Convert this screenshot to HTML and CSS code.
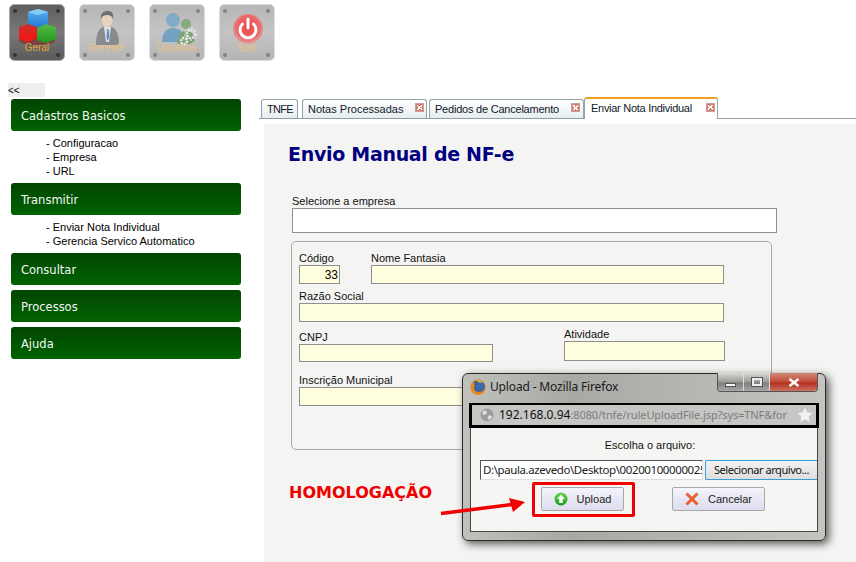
FILE: index.html
```html
<!DOCTYPE html>
<html lang="pt">
<head>
<meta charset="utf-8">
<title>TNFE</title>
<link rel="stylesheet" href="styles.css">
</head>
<body>
<svg class="defs" width="0" height="0" aria-hidden="true">
  <defs>
    <linearGradient id="tileDark" x1="0" y1="0" x2="0" y2="1"><stop offset="0" stop-color="#5e5e5e"/><stop offset=".5" stop-color="#787878"/><stop offset="1" stop-color="#5a5a5a"/></linearGradient>
    <linearGradient id="tileLight" x1="0" y1="0" x2="0" y2="1"><stop offset="0" stop-color="#b6b6b6"/><stop offset=".5" stop-color="#c4c4c4"/><stop offset="1" stop-color="#b4b4b4"/></linearGradient>
    <linearGradient id="blue" x1="0" y1="0" x2="0" y2="1"><stop offset="0" stop-color="#5bb4f4"/><stop offset="1" stop-color="#1f74cc"/></linearGradient>
    <linearGradient id="red" x1="0" y1="0" x2="0" y2="1"><stop offset="0" stop-color="#c83030"/><stop offset="1" stop-color="#ff1010"/></linearGradient>
    <linearGradient id="green" x1="0" y1="0" x2="0" y2="1"><stop offset="0" stop-color="#58b848"/><stop offset="1" stop-color="#1c9a1c"/></linearGradient>
    <radialGradient id="power" cx=".5" cy=".45" r=".55"><stop offset="0" stop-color="#e84848"/><stop offset=".7" stop-color="#e86a6a"/><stop offset="1" stop-color="#e4a0a0"/></radialGradient>
    <radialGradient id="fox" cx=".55" cy=".45" r=".55"><stop offset="0" stop-color="#3d6fb0"/><stop offset=".55" stop-color="#3564a4"/><stop offset="1" stop-color="#e07a18"/></radialGradient>
    <linearGradient id="orb" x1="0" y1="0" x2="0" y2="1"><stop offset="0" stop-color="#6ad848"/><stop offset="1" stop-color="#119a1c"/></linearGradient>
    <filter id="soft"><feGaussianBlur stdDeviation=".45"/></filter>
    <filter id="softText"><feGaussianBlur stdDeviation=".2"/></filter>
    <g id="screws">
      <circle cx="6" cy="7" r="2" fill="#333"/><circle cx="49" cy="7" r="2" fill="#333"/>
      <circle cx="6" cy="51" r="2" fill="#333"/><circle cx="49" cy="51" r="2" fill="#333"/>
    </g>
  </defs>
</svg>

<div class="page">
  <nav class="toolbar">
    <svg class="tile" viewBox="0 0 56 57" role="img" aria-label="Geral">
      <rect x=".5" y=".5" width="55" height="56" rx="5" fill="url(#tileDark)" stroke="#a8a8a8"/>
      <use href="#screws"/>
      <g filter="url(#soft)">
        <path d="M19 8l10-3 10 3v13l-10 4-10-3z" fill="url(#blue)"/>
        <path d="M29 5l10 3-10 3-10-3z" fill="#86cdf8"/>
        <ellipse cx="28" cy="37" rx="18" ry="4" fill="#803030" opacity=".7"/>
        <path d="M10 23l9-3 9 3v11l-9 4-9-3z" fill="url(#red)"/>
        <path d="M28 24l9-4 10 3v12l-10 4-9-3z" fill="url(#green)"/>
      </g>
      <text class="tile-label" filter="url(#softText)" x="28" y="47">Geral</text>
    </svg>
    <svg class="tile" viewBox="0 0 56 57" role="img" aria-label="Gerente">
      <rect x=".5" y=".5" width="55" height="56" rx="5" fill="url(#tileLight)" stroke="#dcdcdc"/>
      <use href="#screws" opacity=".4"/>
      <g filter="url(#soft)" opacity=".85">
        <path d="M17 41c0-10 2-16 7-18h9c5 2 7 8 7 18z" fill="#7e8286"/>
        <path d="M25 23h7l-2 15h-3z" fill="#e8e8e8"/>
        <path d="M28 25h1.500l1 8-2 4-1-4z" fill="#4c86c0"/>
        <ellipse cx="28" cy="16" rx="5.500" ry="7" fill="#ecd6c0"/>
        <path d="M22 15c-1-6 3-8 7-8 4 0 6 3 5 8-1-3-3-4-6-4-3 0-5 1-6 4z" fill="#606468"/>
      </g>
      <text class="tile-label faded" filter="url(#softText)" x="28" y="47">Gerente</text>
    </svg>
    <svg class="tile" viewBox="0 0 56 57" role="img" aria-label="Usuários">
      <rect x=".5" y=".5" width="55" height="56" rx="5" fill="url(#tileLight)" stroke="#dcdcdc"/>
      <use href="#screws" opacity=".4"/>
      <g filter="url(#soft)" opacity=".9">
        <circle cx="24" cy="16" r="7" fill="#7ca9c8"/>
        <path d="M13 38c0-9 4-14 11-14s12 5 12 14z" fill="#6d9fc2"/>
        <circle cx="37" cy="20" r="5" fill="#7fa87a"/>
        <path d="M28 40c1-9 3-13 9-13s8 4 9 10l-5 3z" fill="#73a06e"/>
        <circle cx="42" cy="30" r="4" fill="none" stroke="#efefef" stroke-width="2.500" stroke-dasharray="2 1"/>
        <circle cx="42" cy="30" r="6" fill="none" stroke="#d8d8d8" stroke-width="1.500" stroke-dasharray="2 2"/>
        <circle cx="35" cy="37" r="3" fill="none" stroke="#f2f2f2" stroke-width="2.500" stroke-dasharray="2 1"/>
      </g>
      <text class="tile-label faded" filter="url(#softText)" x="28" y="47">Usuários</text>
    </svg>
    <svg class="tile" viewBox="0 0 56 57" role="img" aria-label="Sair">
      <rect x=".5" y=".5" width="55" height="56" rx="5" fill="url(#tileLight)" stroke="#dcdcdc"/>
      <use href="#screws" opacity=".4"/>
      <g filter="url(#soft)">
        <circle cx="29" cy="25" r="15" fill="url(#power)"/>
        <path d="M23.500 20a8 8 0 1 0 11 0" fill="none" stroke="#fff" stroke-width="3" stroke-linecap="round"/>
        <path d="M29 15v9" stroke="#fff" stroke-width="3" stroke-linecap="round"/>
      </g>
      <text class="tile-label faded" filter="url(#softText)" x="28" y="47">Sair</text>
    </svg>
  </nav>

  <div class="collapse">&lt;&lt;</div>

  <div class="layout">
    <aside class="sidebar">
      <h3 class="acc">Cadastros Basicos</h3>
      <ul class="sub">
        <li>- Configuracao</li>
        <li>- Empresa</li>
        <li>- URL</li>
      </ul>
      <h3 class="acc">Transmitir</h3>
      <ul class="sub">
        <li>- Enviar Nota Individual</li>
        <li>- Gerencia Servico Automatico</li>
      </ul>
      <h3 class="acc">Consultar</h3>
      <h3 class="acc">Processos</h3>
      <h3 class="acc">Ajuda</h3>
    </aside>

    <main class="main">
      <div class="tabs">
        <div class="tab tab-first">TNFE</div>
        <div class="tab tab-notas">Notas Processadas<span class="x"></span></div>
        <div class="tab tab-ped">Pedidos de Cancelamento<span class="x"></span></div>
        <div class="tab tab-active">Enviar Nota Individual<span class="x"></span></div>
      </div>
      <section class="panel">
        <h1 class="title">Envio Manual de NF-e</h1>
        <label class="lbl lbl-emp">Selecione a empresa</label>
        <div class="inp inp-emp"></div>
        <div class="fieldset">
          <div class="row row-a">
            <div class="col"><label class="lbl">Código</label><div class="inp y w-cod">33</div></div>
            <div class="col"><label class="lbl">Nome Fantasia</label><div class="inp y w-nome"></div></div>
          </div>
          <div class="col row-b"><label class="lbl">Razão Social</label><div class="inp y w-razao"></div></div>
          <div class="row row-c">
            <div class="col col-cnpj"><label class="lbl">CNPJ</label><div class="inp y w-cnpj"></div></div>
            <div class="col"><label class="lbl">Atividade</label><div class="inp y w-ativ"></div></div>
          </div>
          <div class="col row-d"><label class="lbl">Inscrição Municipal</label><div class="inp y w-insc"></div></div>
        </div>
        <p class="homolog">HOMOLOGAÇÃO</p>
      </section>
    </main>
  </div>
</div>

<div class="dialog">
  <div class="titlebar">
    <svg class="ff" viewBox="0 0 16 16" aria-hidden="true">
      <circle cx="8" cy="8" r="7.500" fill="url(#fox)"/>
      <path d="M2 3c0 3-2 5-1 8 1 3 4 5 7 5 4 0 7-3 7-6-1 3-5 4-8 3S3 9 5 6C4 6 3 5 4 2z" fill="#ec8a1c"/>
      <path d="M5 1c3-1 7 0 9 3-2-1-3-1-4 0-1-1-3-2-5-3z" fill="#f2b030"/>
    </svg>
    <span class="dlg-title">Upload - Mozilla Firefox</span>
    <div class="winbtns">
      <span class="wb wb-min"><i class="glyph-min"></i></span>
      <span class="wb wb-max"><i class="glyph-max"></i></span>
      <span class="wb wb-close">
        <svg class="glyph-x" viewBox="0 0 12 9" aria-hidden="true"><path d="M1.500 1L10.500 8M10.500 1L1.500 8" stroke="#fff" stroke-width="2.400"/></svg>
      </span>
    </div>
  </div>
  <div class="addr">
    <svg class="globe" viewBox="0 0 14 14" aria-hidden="true">
      <circle cx="7" cy="7" r="6.500" fill="#9c9c9c"/>
      <path d="M3 3c2-1 3 0 4 1 0 2-2 2-3 3S2 6 3 3zM8 8c2-1 4 0 4 1-1 2-2 3-3 3-1-1-2-3-1-4z" fill="#dcdcdc"/>
    </svg>
    <span class="url"><b class="host">192.168.0.94</b><span class="urlpath">:8080/tnfe/ruleUploadFile.jsp?sys=TNF&amp;for</span></span>
    <svg class="star" viewBox="0 0 16 16" aria-hidden="true"><path d="M8 .5l2.300 5 5.200.6-3.900 3.500 1.100 5.400L8 12.300 3.300 15l1.100-5.400L.5 6.100l5.200-.6z" fill="#f2f2f2"/></svg>
  </div>
  <div class="dlg-body">
    <p class="choose">Escolha o arquivo:</p>
    <div class="filerow">
      <div class="filepath">D:\paula.azevedo\Desktop\00200100000025</div>
      <div class="filebtn">Selecionar arquivo...</div>
    </div>
    <div class="actions">
      <div class="hl">
        <div class="btn btn-up">
          <svg class="bi" viewBox="0 0 14 14" aria-hidden="true"><circle cx="7" cy="7" r="6.500" fill="url(#orb)"/><path d="M7 2.500L11 7H8.800v4H5.200V7H3z" fill="#fff"/></svg>
          Upload
        </div>
      </div>
      <div class="btn btn-can">
        <svg class="bi" viewBox="0 0 14 14" aria-hidden="true"><path d="M1.500 1.500L12.500 12.500M12.500 1.500L1.500 12.500" stroke="#e8602c" stroke-width="3"/></svg>
        Cancelar
      </div>
    </div>
  </div>
</div>

<svg class="arrow" viewBox="0 0 90 20" aria-hidden="true">
  <path d="M1 15.500L72 6.500" stroke="#f00000" stroke-width="3.500"/>
  <path d="M69 0L85 4 73 14z" fill="#f00000"/>
</svg>
</body>
</html>
```

FILE: styles.css
```css
* { box-sizing: border-box; }
html, body { margin: 0; padding: 0; height: 562px; overflow: hidden; background: #fff; }
body { font-family: "Liberation Sans", Arial, sans-serif; font-size: 11px; color: #000; position: relative; }
.defs { position: absolute; }
.page { display: flex; flex-direction: column; height: 562px; }

.toolbar { display: flex; gap: 14px; padding: 4px 0 0 9px; }
.tile { width: 56px; height: 57px; display: block; }
.tile-label { font-family: "Liberation Sans", sans-serif; font-size: 10px; text-anchor: middle; fill: #f8a030; }
.tile-label.faded { fill: #f2c080; }

.collapse { width: 37px; height: 14px; margin: 22px 0 0 8px; background: #eeeeee; font-size: 10px; line-height: 15px; }

.layout { display: flex; flex: 1; min-height: 0; }

.sidebar { width: 259px; padding: 2px 0 0 11px; flex: none; }
.acc { width: 230px; height: 32px; margin: 0 0 5px; padding: 0 0 0 10px; border-radius: 3px; background: linear-gradient(#024502, #006300); color: #f4f8f4; font-family: "DejaVu Sans", Verdana, sans-serif; font-size: 11.500px; font-weight: normal; line-height: 34px; }
.sub { list-style: none; margin: 0; padding: 5px 0 5px 35px; line-height: 14px; font-size: 11px; }
.sub li { height: 14px; }
.acc + .sub { margin-top: -5px; }

.main { flex: 1; min-width: 0; display: flex; flex-direction: column; padding-top: 1px; }
.tabs { display: flex; height: 21px; padding-left: 2px; border-bottom: 1px solid #8e9ea4; align-items: flex-end; }
.tab { position: relative; height: 19px; margin-right: 2px; padding: 0 0 0 5px; border: 1px solid #93a3a8; border-bottom: 0; border-radius: 3px 3px 0 0; background: linear-gradient(#ffffff, #e6edf0); font-size: 11px; line-height: 18px; color: #101828; white-space: nowrap; }
.tab-first { width: 37px; margin-right: 4px; letter-spacing: -.7px; }
.tab-notas { width: 125px; }
.tab-ped { width: 155px; margin-right: 0; letter-spacing: -.22px; }
.tab-active { width: 134px; height: 22px; margin-bottom: -1px; padding-left: 6px; border-top: 2px solid #f0a020; background: #fff; line-height: 18px; letter-spacing: -.28px; }
.x { position: absolute; right: 2px; top: 3px; width: 9px; height: 9px; background: #d87c70; border: 1px solid #c8a098; }
.x::before { content: ""; position: absolute; inset: 1px; background: linear-gradient(45deg, transparent 40%, #fff 40%, #fff 60%, transparent 60%), linear-gradient(-45deg, transparent 40%, #fff 40%, #fff 60%, transparent 60%); }
.tab-ped .x { right: 3px; }
.tab-active .x { top: 4px; }

.panel { flex: 1; margin: 5px 0 0 5px; padding: 18px 0 0 24px; background: #f4f4f2; position: relative; }
.title { margin: 0; font-family: "DejaVu Sans", Verdana, sans-serif; font-size: 19px; font-weight: bold; color: #000080; line-height: 24px; letter-spacing: -.3px; }
.lbl { display: block; height: 15px; font-size: 11px; line-height: 16px; color: #111; }
.lbl-emp { margin: 28px 0 0 4px; height: 14px; line-height: 14px; }
.inp { border: 1px solid #8f8f8f; background: #fff; height: 25px; font-size: 12px; text-align: right; padding: 1px; }
.inp.y { background: #ffffdf; height: 19px; line-height: 16px; }
.inp-emp { width: 485px; margin-left: 4px; }
.fieldset { width: 481px; height: 209px; margin: 8px 0 0 3px; padding: 8px 0 0 7px; border: 1px solid #ababab; border-radius: 5px; }
.row { display: flex; align-items: flex-start; }
.row-a { gap: 31px; }
.row-b { margin-top: 4px; }
.row-c { margin-top: 4px; gap: 71px; }
.col-cnpj { margin-top: 3px; }
.row-d { margin-top: 10px; }
.w-cod { width: 41px; padding-right: 1px; }
.w-nome { width: 353px; }
.w-razao { width: 425px; }
.inp.w-cnpj { width: 194px; height: 18px; }
.inp.w-ativ { width: 161px; height: 20px; }
.w-insc { width: 200px; }
.homolog { margin: 33px 0 0 1px; font-family: "DejaVu Sans", Verdana, sans-serif; font-size: 16px; font-weight: bold; color: #f00000; line-height: 19px; }

.arrow { position: absolute; left: 440px; top: 498px; width: 90px; height: 20px; }

.dialog { position: absolute; left: 462px; top: 373px; width: 364px; height: 168px; border: 1px solid #2c2c2c; border-radius: 6px; background: linear-gradient(90deg, #c0c0bc, #a8a8a4 30%, #b8b8b4 70%, #c4c4c0); box-shadow: 3px 3px 8px rgba(0,0,0,.65); display: flex; flex-direction: column; font-family: "Noto Sans", "Open Sans", sans-serif; color: #111; }
.titlebar { display: flex; align-items: flex-start; height: 28px; padding: 5px 0 0 7px; position: relative; }
.ff { width: 16px; height: 16px; flex: none; }
.dlg-title { margin-left: 4px; font-size: 12px; letter-spacing: -.15px; line-height: 16px; color: #1a1a1a; }
.winbtns { position: absolute; top: -1px; right: 7px; display: flex; height: 19px; border: 1px solid #555; border-top: 0; border-radius: 0 0 4px 4px; overflow: hidden; }
.wb { display: flex; align-items: center; justify-content: center; height: 18px; background: linear-gradient(#d8d8d4, #9a9a98 50%, #7e7e7c 55%, #a8a8a6); border-right: 1px solid #ddd; }
.wb-min { width: 26px; }
.wb-max { width: 26px; }
.wb-close { width: 47px; border-right: 0; background: linear-gradient(#cf8a78, #c04a34 50%, #b03020 55%, #d07060); }
.glyph-min { display: block; width: 11px; height: 4px; margin-top: 6px; background: #f4f4f4; border: 1px solid #555; }
.glyph-max { display: block; width: 10px; height: 8px; border: 2px solid #eee; outline: 1px solid #555; outline-offset: 0; }
.glyph-x { width: 12px; height: 9px; }

.addr { display: flex; align-items: center; height: 25px; margin: 1px 6px 0 6px; padding: 0 3px 0 8px; border: 3px solid #000; border-width: 2px 3px 3px; background: #c6c6c4; flex: none; }
.globe { width: 14px; height: 14px; flex: none; }
.url { margin-left: 5px; white-space: nowrap; font-size: 12px; line-height: 16px; color: #7c7c7c; }
.host { font-weight: normal; color: #111; }
.urlpath { font-size: 11px; letter-spacing: -.1px; }
.star { width: 16px; height: 16px; margin-left: auto; flex: none; }

.dlg-body { flex: 1; margin: 0 7px 8px 7px; background: #f5f5f3; border: 1px solid #444; border-top: 0; }
.choose { margin: 10px 0 0; font-family: "Liberation Sans", sans-serif; font-size: 11px; line-height: 14px; text-align: center; padding-left: 12px; }
.filerow { display: flex; margin: 8px 0 0 9px; height: 20px; }
.filepath { width: 223px; height: 20px; overflow: hidden; white-space: nowrap; background: #fff; border: 1px solid #777; border-color: #555 #ddd #ddd #555; font-size: 11.500px; letter-spacing: -.4px; line-height: 18px; padding-left: 2px; color: #222; }
.filebtn { flex: 1; margin-left: 2px; height: 20px; background: linear-gradient(#f2f2f2, #dedede); border: 1px solid #3c9cd8; border-right: 0; border-radius: 2px 0 0 2px; font-size: 11px; letter-spacing: -.45px; line-height: 18px; text-align: center; white-space: nowrap; }
.actions { display: flex; align-items: flex-start; margin: 2px 0 0 61px; }
.hl { width: 103px; height: 35px; padding: 2px 0 0 6px; border: 3px solid #f00000; border-radius: 2px; }
.btn { display: flex; align-items: center; justify-content: center; gap: 9px; height: 24px; background: linear-gradient(#f4f4fa, #dcdcee); border: 1px solid #a8a8a8; border-radius: 2px; font-family: "Liberation Sans", sans-serif; font-size: 11px; color: #222; }
.btn-up { width: 83px; }
.btn-can { width: 93px; margin: 5px 0 0 37px; }
.bi { width: 14px; height: 14px; flex: none; }
```
